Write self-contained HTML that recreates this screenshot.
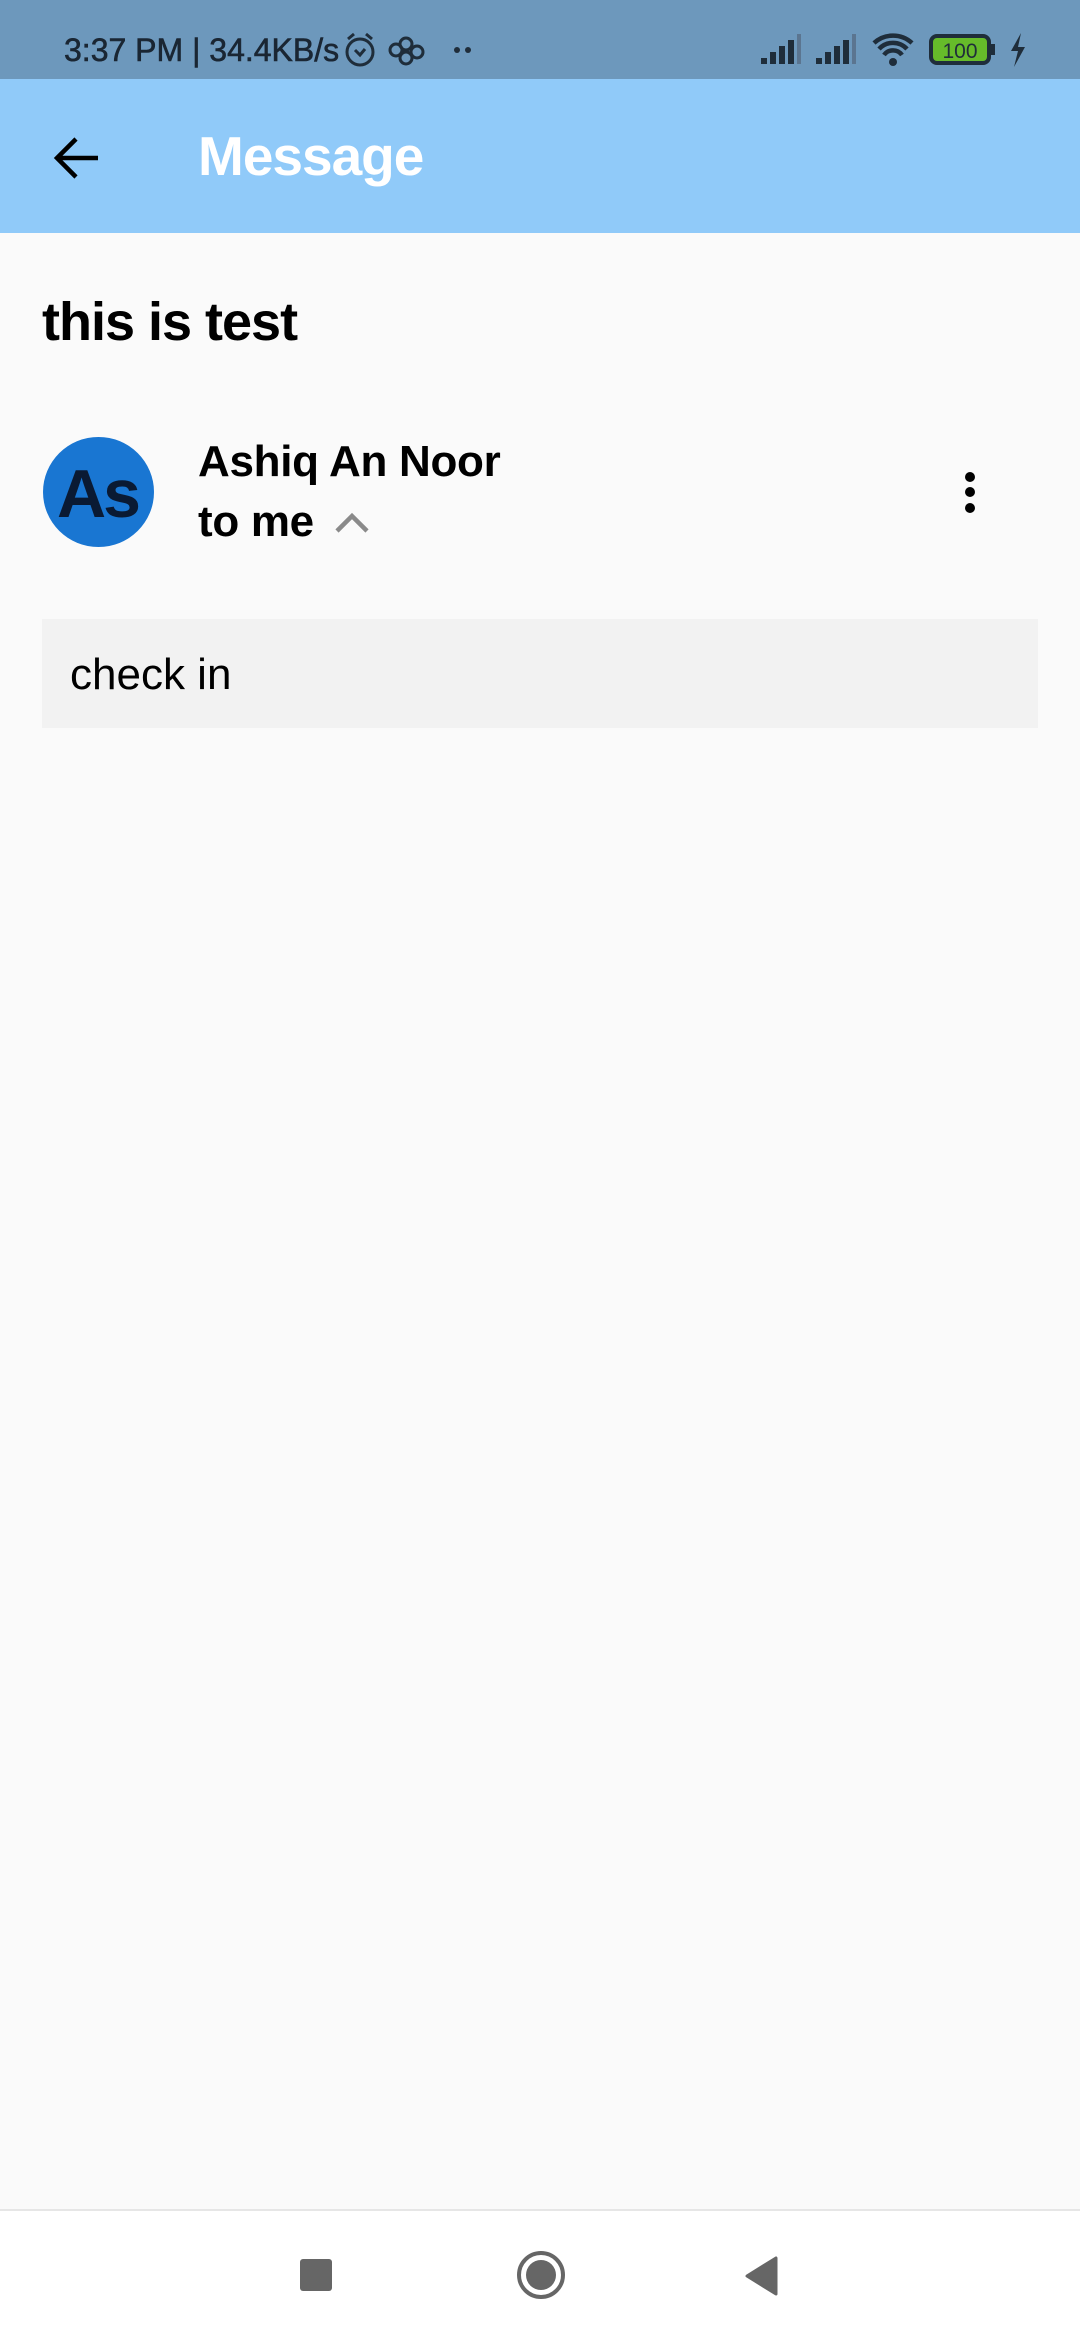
<!DOCTYPE html>
<html><head><meta charset="utf-8"><style>
*{margin:0;padding:0;box-sizing:border-box}
body{width:1080px;height:2340px;background:#fafafa;position:relative;overflow:hidden;font-family:"Liberation Sans",sans-serif}
.abs{position:absolute}
</style></head><body>
<div class="abs" style="left:0;top:0;width:1080px;height:79px;background:#6d98bc"></div>
<div class="abs" style="left:64px;top:32px;font-size:32px;color:#1a2633;white-space:nowrap;-webkit-text-stroke:0.6px #1a2633">3:37 PM | 34.4KB/s</div>
<svg class="abs" style="left:340px;top:30px" width="140" height="40" viewBox="0 0 140 40">
<circle cx="20" cy="22" r="13" fill="none" stroke="#1f2d3a" stroke-width="3"/>
<path d="M8 9l6-5M32 9l-6-5M15 20l5 5 5-6" fill="none" stroke="#1f2d3a" stroke-width="3"/>
<g fill="none" stroke="#1f2d3a" stroke-width="3"><circle cx="66" cy="14" r="6"/><circle cx="77" cy="22" r="6"/><circle cx="66" cy="28" r="6"/><circle cx="56" cy="20" r="6"/></g>
<circle cx="117" cy="20" r="3" fill="#1f2d3a"/><circle cx="128" cy="20" r="3" fill="#1f2d3a"/>
</svg>
<svg class="abs" style="left:755px;top:30px" width="280" height="40" viewBox="0 0 280 40">
<g fill="#1f2d3a"><rect x="6" y="28" width="6" height="6"/><rect x="15" y="22" width="6" height="12"/><rect x="24" y="16" width="6" height="18"/><rect x="33" y="10" width="6" height="24"/></g><rect x="42" y="4" width="4" height="30" fill="#5b7590"/>
<g fill="#1f2d3a"><rect x="61" y="28" width="6" height="6"/><rect x="70" y="22" width="6" height="12"/><rect x="79" y="16" width="6" height="18"/><rect x="88" y="10" width="6" height="24"/></g><rect x="97" y="4" width="4" height="30" fill="#5b7590"/>
<path d="M119 13a28 28 0 0 1 38 0M124 19a19 19 0 0 1 28 0M129 25a11 11 0 0 1 18 0" fill="none" stroke="#1f2d3a" stroke-width="4.5"/><circle cx="138" cy="32" r="4" fill="#1f2d3a"/>
<rect x="176" y="6" width="58" height="27" rx="6" fill="#66bb2a" stroke="#1f2d3a" stroke-width="4"/><rect x="236" y="14" width="4" height="11" fill="#1f2d3a"/>
<text x="205" y="28" font-size="21" text-anchor="middle" fill="#1f2d3a" font-family="Liberation Sans">100</text>
<path d="M266 3l-10 18h7l-4 16 11-20h-7z" fill="#1f2d3a"/>
</svg>
<div class="abs" style="left:0;top:79px;width:1080px;height:154px;background:#90caf9"></div>
<svg class="abs" style="left:52px;top:135px" width="50" height="46" viewBox="0 0 50 46"><path d="M46 23H6M24 4L5 23l19 19" fill="none" stroke="#000" stroke-width="4.5"/></svg>
<div class="abs" style="left:198px;top:124px;font-size:55px;font-weight:bold;color:#fff;letter-spacing:-1px">Message</div>
<div class="abs" style="left:42px;top:291px;font-size:54px;font-weight:bold;color:#000;letter-spacing:-1px">this is test</div>
<div class="abs" style="left:43px;top:437px;width:111px;height:110px;border-radius:50%;background:#1976d2"></div>
<div class="abs" style="left:57px;top:455px;font-size:68px;font-weight:bold;color:#0a1a33;letter-spacing:-3px">As</div>
<div class="abs" style="left:198px;top:437px;font-size:44px;font-weight:bold;color:#000;letter-spacing:-0.3px">Ashiq An Noor</div>
<div class="abs" style="left:198px;top:497px;font-size:44px;font-weight:bold;color:#000;letter-spacing:-0.3px">to me</div>
<svg class="abs" style="left:334px;top:510px" width="36" height="24" viewBox="0 0 36 24"><path d="M3 21L18 6l15 15" fill="none" stroke="#8a8a8a" stroke-width="4.5"/></svg>
<div class="abs" style="left:965px;top:472px;width:10px;height:10px;border-radius:50%;background:#000"></div>
<div class="abs" style="left:965px;top:487px;width:10px;height:10px;border-radius:50%;background:#000"></div>
<div class="abs" style="left:965px;top:503px;width:10px;height:10px;border-radius:50%;background:#000"></div>
<div class="abs" style="left:42px;top:619px;width:996px;height:109px;background:#f2f2f2"></div>
<div class="abs" style="left:70px;top:650px;font-size:44px;color:#000">check in</div>
<div class="abs" style="left:0;top:2209px;width:1080px;height:131px;background:#fff;border-top:2px solid #e6e6e6"></div>
<div class="abs" style="left:300px;top:2259px;width:32px;height:32px;border-radius:3px;background:#666"></div>
<div class="abs" style="left:517px;top:2251px;width:48px;height:48px;border-radius:50%;border:4px solid #666"></div>
<div class="abs" style="left:526px;top:2260px;width:30px;height:30px;border-radius:50%;background:#666"></div>
<svg class="abs" style="left:744px;top:2256px" width="36" height="40" viewBox="0 0 36 40"><path d="M32 2v36L3 20z" fill="#666" stroke="#666" stroke-width="3" stroke-linejoin="round"/></svg>
</body></html>
